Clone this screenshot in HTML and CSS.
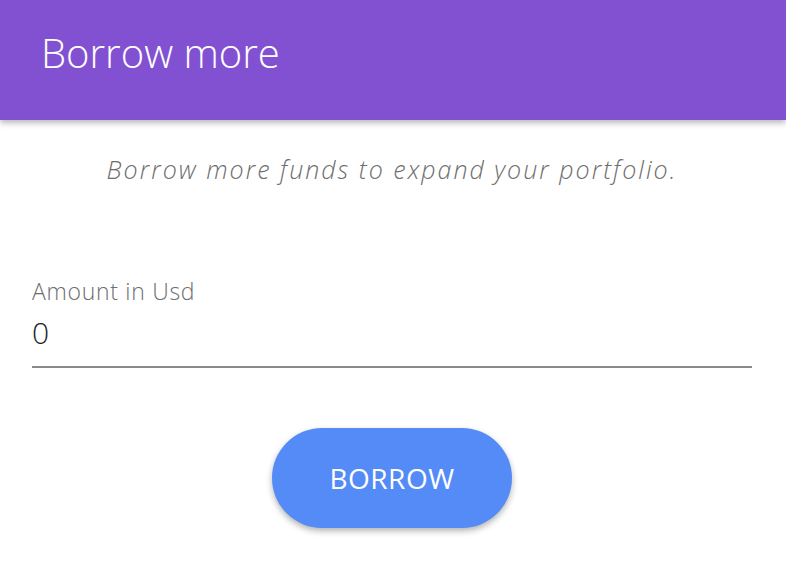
FILE: index.html
```html
<!DOCTYPE html>
<html>
<head>
<meta charset="utf-8">
<link rel="stylesheet" href="styles.css">
</head>
<body>
<header class="appbar"><h1 class="title">Borrow more</h1></header>
<main class="content">
  <p class="subtitle">Borrow more funds to expand your portfolio.</p>
  <div class="field">
    <label class="label">Amount in Usd</label>
    <div class="value">0</div>
  </div>
  <div class="actions"><button class="btn">BORROW</button></div>
</main>
</body>
</html>
```
FILE: styles.css
```css
html, body { margin: 0; padding: 0; background: #fff; }
body { font-family: "Open Sans", "Lato", "Liberation Sans", sans-serif; width: 786px; height: 578px; overflow: hidden; }
.appbar {
  height: 120px;
  background: #8251d2;
  display: flex;
  align-items: center;
  padding-left: 41px;
  box-shadow: 0 3px 6px rgba(0,0,0,0.28);
  position: relative;
  z-index: 1;
}
.title { margin: -15px 0 0; color: #fff; font-weight: 300; font-size: 40px; line-height: 48px; letter-spacing: 0; }
.content { padding: 0 34px 0 32px; }
.subtitle { margin: 34px 0 0; text-align: center; font-style: italic; font-weight: 300; color: #6e6e6e; font-size: 25px; line-height: 30px; letter-spacing: 2px; }
.field { margin-top: 94px; border-bottom: 2px solid #8a8a8a; padding-bottom: 15px; }
.label { display: block; color: #6e6e6e; font-weight: 300; font-size: 23px; line-height: 26px; letter-spacing: 0.7px; }
.value { color: #222; font-weight: 300; font-size: 30px; line-height: 36px; margin-top: 11px; }
.actions { display: flex; justify-content: center; margin-top: 60px; }
.btn {
  width: 240px; height: 100px; border: none; border-radius: 50px;
  background: #548bf7; color: #fff; font-family: inherit; font-size: 28px; letter-spacing: 0.5px; padding: 0;
  box-shadow: 0 3px 6px rgba(0,0,0,0.3);
}
```
